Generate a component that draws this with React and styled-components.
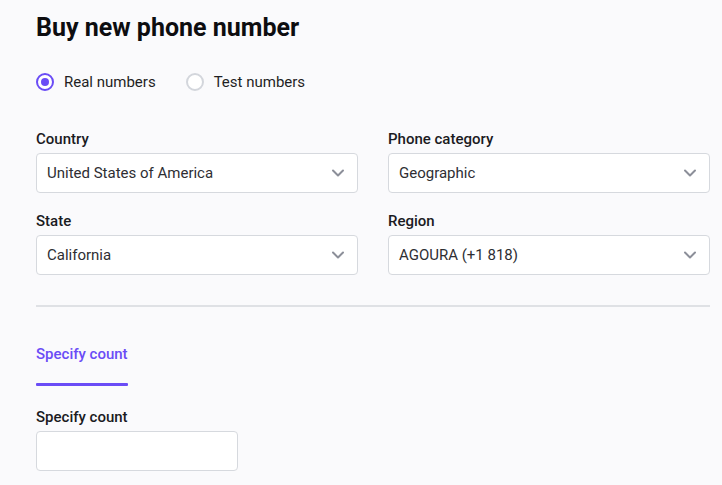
import styled, { createGlobalStyle } from 'styled-components'

const GlobalStyle = createGlobalStyle`
    body {
        margin: 0;
        background: #fafafc;
        font-family: Roboto, "Noto Sans", sans-serif;
        color: #1b1b1f;
    }
`

const Page = styled.main`
    width: 674px;
    padding: 12px 0 0 36px;
    min-height: 100vh;
    box-sizing: content-box;
`

const Title = styled.h1`
    margin: 0;
    font-size: 25px;
    line-height: 32px;
    font-weight: 700;
    color: #0d0d10;
`

const RadioRow = styled.div`
    display: flex;
    gap: 30px;
    margin-top: 28px;
`

const RadioOption = styled.label`
    display: flex;
    align-items: center;
    gap: 10px;
    font-size: 15px;
    line-height: 20px;
    color: #1f1f24;
`

const RadioDot = styled.span`
    width: 18px;
    height: 18px;
    box-sizing: border-box;
    border-radius: 50%;
    border: 2px solid ${(props) => (props.checked ? '#6a4cf6' : '#d3d6dc')};
    background: #fff;
    display: flex;
    align-items: center;
    justify-content: center;

    &::after {
        content: '';
        width: 8px;
        height: 8px;
        border-radius: 50%;
        background: ${(props) => (props.checked ? '#6a4cf6' : 'transparent')};
    }
`

const Grid = styled.div`
    display: grid;
    grid-template-columns: 1fr 1fr;
    column-gap: 30px;
    row-gap: 20px;
    margin-top: 39px;
`

const Field = styled.div`
    display: flex;
    flex-direction: column;
    gap: 6px;
    width: ${(props) => props.width || 'auto'};
`

const Label = styled.span`
    font-size: 15px;
    line-height: 16px;
    font-weight: 500;
    color: #1b1b1f;
`

const SelectBox = styled.div`
    height: 40px;
    box-sizing: border-box;
    border: 1px solid #d6d9de;
    border-radius: 4px;
    background: #fff;
    display: flex;
    align-items: center;
    justify-content: space-between;
    padding: 0 12px 0 10px;
    font-size: 15px;
    color: #2e2e33;
`

const Divider = styled.hr`
    border: none;
    border-top: 2px solid #dfe1e5;
    margin: 30px 0 0;
`

const Tab = styled.div`
    display: inline-flex;
    flex-direction: column;
    margin-top: 39px;
    font-size: 15px;
    line-height: 16px;
    font-weight: 500;
    color: #6a4cf6;

    &::after {
        content: '';
        height: 3px;
        margin-top: 21px;
        background: #6a4cf6;
        border-radius: 1px;
    }
`

const CountSection = styled.div`
    margin-top: 23px;
`

const TextInput = styled.input`
    height: 40px;
    box-sizing: border-box;
    border: 1px solid #d6d9de;
    border-radius: 4px;
    background: #fff;
    outline: none;
    padding: 0 10px;
    font: inherit;
`

const Chevron = () => (
    <svg width="14" height="14" viewBox="0 0 14 14" fill="none">
        <path d="M2 4.5L7 9.5L12 4.5" stroke="#8c8f99" strokeWidth="2" strokeLinecap="round" strokeLinejoin="round" />
    </svg>
)

const Select = ({ label, value }) => (
    <Field>
        <Label>{label}</Label>
        <SelectBox>
            {value}
            <Chevron />
        </SelectBox>
    </Field>
)

export default function App() {
    return (
        <Page>
            <GlobalStyle />
            <Title>Buy new phone number</Title>
            <RadioRow>
                <RadioOption>
                    <RadioDot checked />
                    Real numbers
                </RadioOption>
                <RadioOption>
                    <RadioDot />
                    Test numbers
                </RadioOption>
            </RadioRow>
            <Grid>
                <Select label="Country" value="United States of America" />
                <Select label="Phone category" value="Geographic" />
                <Select label="State" value="California" />
                <Select label="Region" value="AGOURA (+1 818)" />
            </Grid>
            <Divider />
            <Tab>Specify count</Tab>
            <CountSection>
                <Field width="202px">
                    <Label>Specify count</Label>
                    <TextInput />
                </Field>
            </CountSection>
        </Page>
    )
}
